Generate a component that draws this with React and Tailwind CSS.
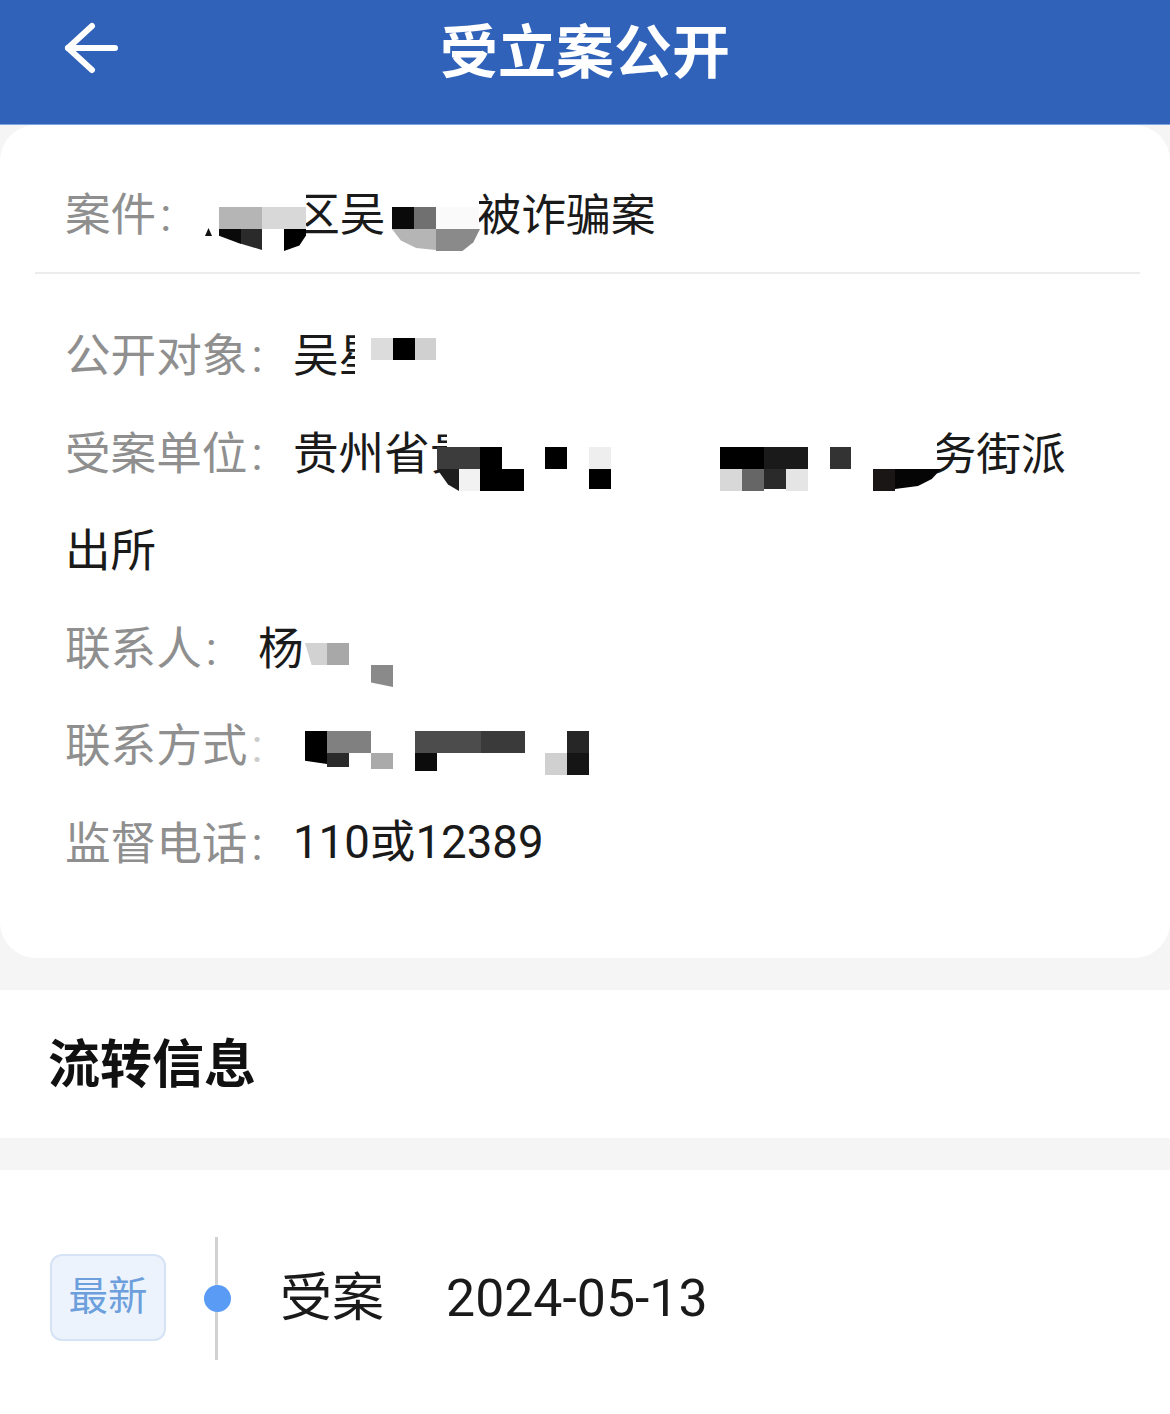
const FONT = "font-['Roboto','Noto_Sans_CJK_SC',sans-serif]";

// mosaic cells painted over the redacted text: [left, top, width, height, colour, clip-path]
const mosaic = [
  // case line
  [200, 190, 106, 17, "#ffffff"],
  [204, 207, 15, 44, "#ffffff"],
  [205, 228, 7, 8, "#111111", "polygon(50% 0,100% 100%,0 100%)"],
  [219, 207, 43, 22, "#b5b5b5"],
  [262, 207, 44, 22, "#d8d8d8"],
  [219, 229, 22, 15, "#0a0a0a", "polygon(0 0,100% 0,100% 100%,0 45%)"],
  [241, 229, 21, 21, "#2a2a2a", "polygon(0 0,100% 0,100% 100%,0 70%)"],
  [262, 229, 22, 22, "#ffffff"],
  [284, 229, 22, 22, "#000000", "polygon(0 0,100% 0,100% 30%,70% 75%,0 100%)"],
  [384, 190, 95, 17, "#ffffff"],
  [384, 207, 8, 44, "#ffffff"],
  [392, 207, 22, 22, "#0a0a0a"],
  [414, 207, 22, 22, "#707070"],
  [436, 207, 43, 22, "#fafafa"],
  [392, 229, 44, 21, "#b5b5b5", "polygon(0 0,100% 0,100% 100%,55% 90%,20% 55%)"],
  [436, 229, 44, 22, "#8a8a8a", "polygon(0 0,100% 0,85% 60%,60% 100%,0 100%)"],
  // disclosure target
  [355, 325, 16, 60, "#ffffff"],
  [371, 325, 65, 13, "#ffffff"],
  [371, 360, 65, 25, "#ffffff"],
  [371, 338, 22, 22, "#dcdcdc"],
  [393, 338, 22, 22, "#000000"],
  [415, 338, 21, 22, "#d0d0d0"],
  // receiving unit
  [447, 425, 490, 22, "#ffffff"],
  [925, 425, 12, 40, "#ffffff"],
  [437, 447, 43, 22, "#3c3c3c"],
  [480, 447, 22, 22, "#000000"],
  [437, 469, 22, 22, "#1e1e1e", "polygon(0 0,100% 0,100% 100%,50% 70%)"],
  [459, 469, 21, 22, "#f2f2f2"],
  [480, 469, 44, 22, "#000000"],
  [545, 447, 22, 22, "#000000"],
  [589, 447, 22, 22, "#eeeeee"],
  [589, 469, 22, 20, "#000000"],
  [720, 447, 44, 22, "#000000"],
  [764, 447, 44, 22, "#1a1a1a"],
  [720, 469, 22, 22, "#d8d8d8"],
  [742, 469, 22, 22, "#666666"],
  [764, 469, 22, 20, "#2a2a2a"],
  [786, 469, 22, 22, "#e5e5e5"],
  [830, 447, 21, 22, "#333333"],
  [873, 469, 22, 22, "#1a1616"],
  [895, 469, 46, 20, "#050505", "polygon(0 0,100% 0,80% 50%,50% 85%,0 100%)"],
  // contact person
  [305, 643, 22, 22, "#d2d2d2", "polygon(0 0,100% 0,100% 100%,30% 100%)"],
  [327, 643, 22, 22, "#a8a8a8"],
  [371, 665, 22, 22, "#8a8a8a", "polygon(0 0,100% 0,100% 100%,0 80%)"],
  // contact number
  [254, 728, 12, 40, "rgba(255,255,255,0.55)"],
  [305, 731, 22, 33, "#000000", "polygon(0 0,100% 0,100% 100%,0 90%)"],
  [327, 731, 44, 22, "#808080"],
  [327, 753, 22, 14, "#2a2a2a"],
  [371, 753, 22, 16, "#aaaaaa"],
  [415, 731, 66, 22, "#4c4c4c"],
  [481, 731, 44, 22, "#3a3a3a"],
  [415, 753, 22, 18, "#0c0c0c"],
  [567, 731, 22, 22, "#262626"],
  [545, 753, 22, 22, "#d0d0d0"],
  [567, 753, 22, 22, "#151515"],
];

function Row({ label, labelWidth = "w-[228px]", children }) {
  return (
    <div className="flex">
      <div className={`${labelWidth} shrink-0 text-[#8f8f8f]`}>
        {label}
        <span className="ml-[4px]">:</span>
      </div>
      <div className="min-w-0">{children}</div>
    </div>
  );
}

export default function App() {
  return (
    <div className={`${FONT} relative w-[1170px] h-[1414px] overflow-hidden bg-[#f5f5f5] text-[#1a1a1a]`}>
      <header className="relative h-[125px] bg-[#2f62b8] border-b border-[#7fa4dc] flex items-center justify-center">
        <svg className="absolute left-[60px] top-[18px]" width="64" height="60" viewBox="0 0 64 60" fill="none" stroke="#ffffff" strokeWidth="6" strokeLinecap="round" strokeLinejoin="round">
          <path d="M8 30H55" />
          <path d="M32 8L8 30L32 52" />
        </svg>
        <h1 className="mb-[19px] text-[58px] leading-none font-bold text-white">受立案公开</h1>
      </header>

      <section className="h-[833px] bg-white rounded-[36px] pl-[35px] pr-[30px] pt-[42px]">
        <div className="pl-[30px] h-[98px] leading-[98px] text-[45.6px] flex">
          <span className="text-[#8f8f8f]">案件<span className="ml-[4px]">:</span></span>
          <span className="ml-[32px]">
            <span className="inline-block w-[91px]" />区吴<span className="inline-block w-[91px]" /><span className="text-[44.8px]">被诈骗案</span>
          </span>
        </div>
        <div className="mt-[7px] border-t-2 border-[#ececec]" />
        <div className="mt-[34px] pl-[30px] text-[45.6px] leading-[97.6px]">
          <Row label="公开对象">吴星</Row>
          <Row label="受案单位">
            贵州省贵<span className="inline-block w-[456px]" /><span className="text-[44.8px]">务街派</span>
          </Row>
          <div>出所</div>
          <Row label="联系人" labelWidth="w-[193px]">杨</Row>
          <Row label="联系方式" />
          <Row label="监督电话">
            <span className="inline-block -translate-y-[2px]">110或12389</span>
          </Row>
        </div>
      </section>

      <section className="mt-[32px] h-[148px] bg-white flex items-center pl-[48px] pt-[4px]">
        <h2 className="text-[52px] font-bold leading-none text-[#111111]">流转信息</h2>
      </section>

      <section className="mt-[32px] h-[244px] bg-white pt-[67px] pl-[50px] flex items-start">
        <div className="h-[123px] flex items-center">
          <div className="mb-[3px] w-[116px] h-[87px] rounded-[12px] bg-[#edf3fc] border-2 border-[#d6e3f4] flex items-center justify-center text-[39.5px] leading-none text-[#6c9fdc]">
            最新
          </div>
          <div className="relative ml-[49px] w-[3px] h-[123px] bg-[#d2d2d2]">
            <div className="absolute left-[-11px] top-[48px] w-[27px] h-[27px] rounded-full bg-[#5a9bf5]" />
          </div>
          <div className="ml-[62px] text-[52px] leading-none">受案</div>
          <div className="ml-[62px] text-[51.8px] leading-none">2024-05-13</div>
        </div>
      </section>

      {mosaic.map(([left, top, width, height, background, clipPath], i) => (
        <div key={i} className="absolute" style={{ left, top, width, height, background, clipPath }} />
      ))}
    </div>
  );
}
